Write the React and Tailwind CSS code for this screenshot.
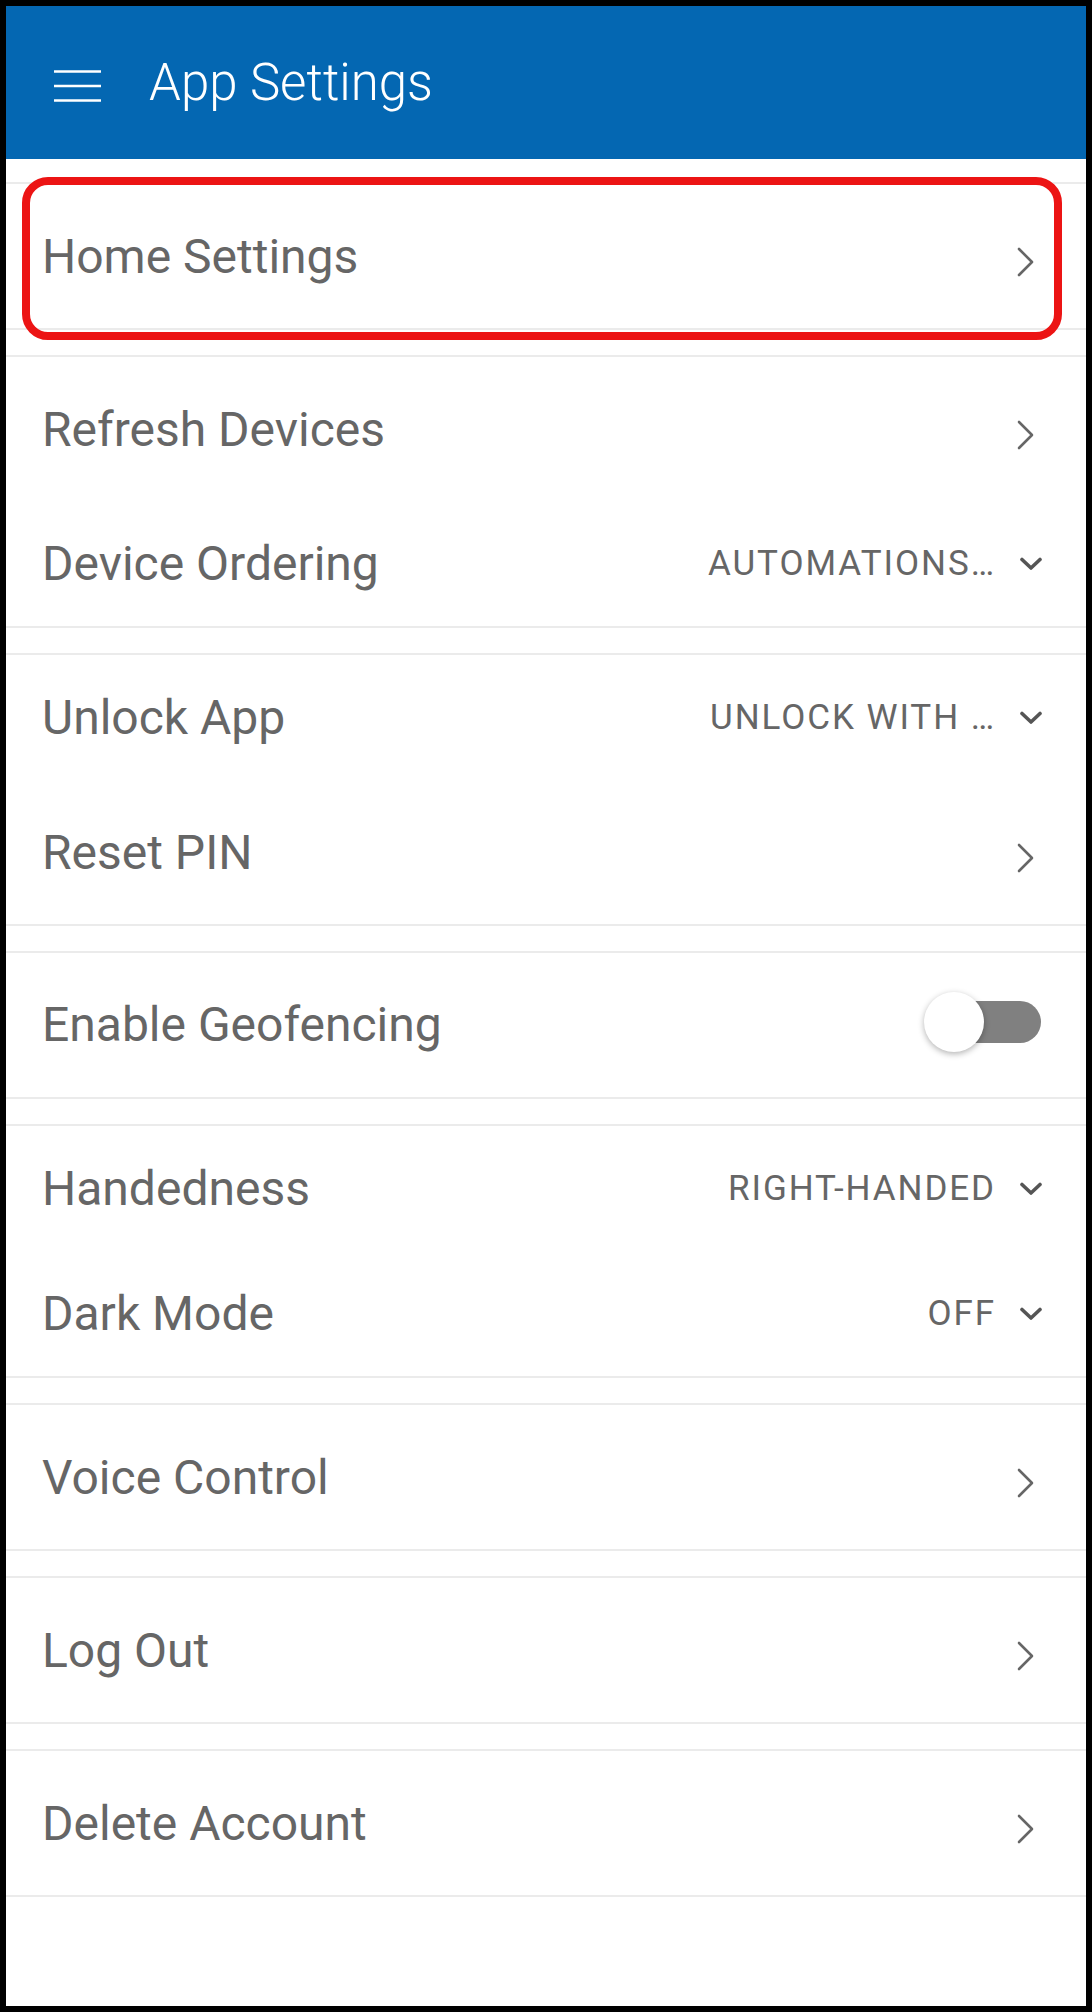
import React from "react";

const font = { fontFamily: "Roboto, 'Noto Sans', sans-serif" };

function ChevronRight() {
  return (
    <svg width="17" height="30" viewBox="0 0 17 30" className="mt-[12px]">
      <polyline points="2,2 15,15 2,28" fill="none" stroke="#666" strokeWidth="2.6" strokeLinecap="round" strokeLinejoin="round" />
    </svg>
  );
}

function ChevronDown() {
  return (
    <svg width="24" height="14" viewBox="0 0 24 14">
      <polyline points="3,2.5 12,11 21,2.5" fill="none" stroke="#555" strokeWidth="3.6" strokeLinecap="round" strokeLinejoin="round" />
    </svg>
  );
}

function NavRow({ label }) {
  return (
    <div className="h-[144px] flex items-center justify-between pl-[36px] pr-[52px]">
      <span className="text-[48px] leading-none text-[#666] mt-[2px]">{label}</span>
      <ChevronRight />
    </div>
  );
}

function DropRow({ label, value }) {
  return (
    <div className="h-[125px] flex items-center justify-between pl-[36px] pr-[43px]">
      <span className="text-[48px] leading-none text-[#666] mt-[1px]">{label}</span>
      <div className="flex items-center gap-[23px]">
        <span className="text-[35px] leading-none tracking-[0.055em] text-[#666]">{value}</span>
        <ChevronDown />
      </div>
    </div>
  );
}

function ToggleRow({ label }) {
  return (
    <div className="h-[144px] flex items-center justify-between pl-[36px] pr-[45px]">
      <span className="text-[48px] leading-none text-[#666]">{label}</span>
      <div className="relative w-[117px] h-[60px] mb-[6px] flex items-center justify-end">
        <div className="w-[102px] h-[42px] rounded-full bg-[#808080]" />
        {/* knob */}
        <div className="absolute left-0 top-0 w-[60px] h-[60px] rounded-full bg-white shadow-[0_2px_6px_rgba(0,0,0,0.3)]" />
      </div>
    </div>
  );
}

function Section({ children }) {
  return <div className="border-y-2 border-[#ebebeb] bg-white">{children}</div>;
}

export default function App() {
  return (
    <div className="w-[1092px] h-[2012px] bg-black p-[6px]" style={font}>
      <div className="relative w-full h-full bg-white flex flex-col">
        {/* App bar */}
        <div className="h-[153px] bg-[#0467b2] flex items-center pl-[48px] shrink-0">
          <svg width="47" height="32" viewBox="0 0 47 32" className="mt-[6px]">
            <g stroke="#fff" strokeWidth="2.5">
              <line x1="0" y1="1.5" x2="47" y2="1.5" />
              <line x1="0" y1="16" x2="47" y2="16" />
              <line x1="0" y1="30.5" x2="47" y2="30.5" />
            </g>
          </svg>
          <span className="ml-[48px] text-[51px] font-light text-white leading-none">App Settings</span>
        </div>

        <div className="flex flex-col gap-[25px] pt-[23px]">
          <Section>
            <NavRow label="Home Settings" />
          </Section>
          <Section>
            <NavRow label="Refresh Devices" />
            <DropRow label="Device Ordering" value="AUTOMATIONS…" />
          </Section>
          <Section>
            <DropRow label="Unlock App" value="UNLOCK WITH …" />
            <NavRow label="Reset PIN" />
          </Section>
          <Section>
            <ToggleRow label="Enable Geofencing" />
          </Section>
          <Section>
            <DropRow label="Handedness" value="RIGHT-HANDED" />
            <DropRow label="Dark Mode" value="OFF" />
          </Section>
          <Section>
            <NavRow label="Voice Control" />
          </Section>
          <Section>
            <NavRow label="Log Out" />
          </Section>
          <Section>
            <NavRow label="Delete Account" />
          </Section>
        </div>

        {/* highlight annotation */}
        <div className="absolute left-[16px] top-[171px] w-[1040px] h-[163px] rounded-[26px] border-[8px] border-[#ec1414] pointer-events-none" />
      </div>
    </div>
  );
}
